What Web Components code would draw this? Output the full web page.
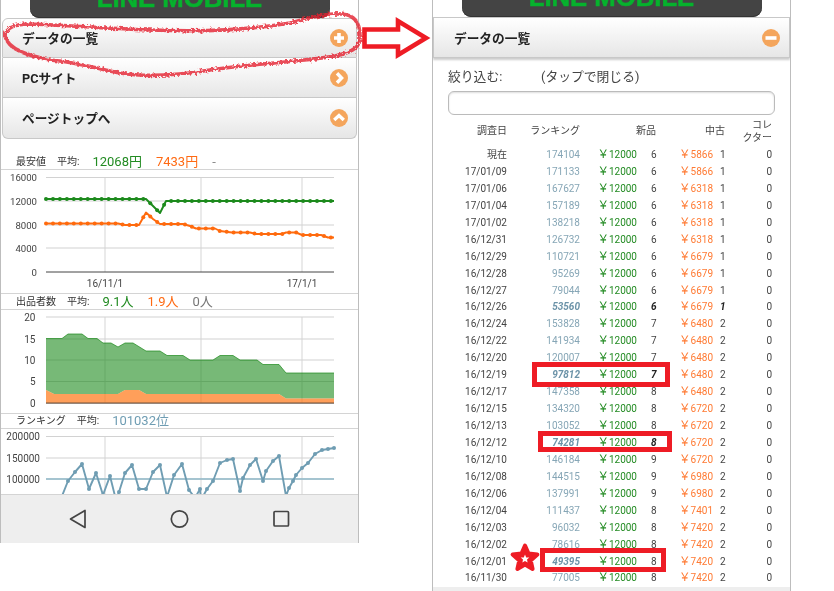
<!DOCTYPE html>
<html lang="ja">
<head>
<meta charset="utf-8">
<title>データの一覧</title>
<style>
  html, body { margin: 0; padding: 0; background: #fff; }
  body { width: 834px; height: 591px; overflow: hidden; font-family: Roboto, "Noto Sans CJK JP", sans-serif; color: #444; }
  shot-canvas { --blur: blur(.4px); }
</style>
</head>
<body>
<shot-canvas>
  <phone-shot style="left:0;top:0;width:359px;height:543px">
    <logo-bar style="margin:0 28.5px;height:18px"></logo-bar>
    <acc-row icon="plus" first style="height:40px">データの一覧</acc-row>
    <acc-row icon="right" style="height:40px">PCサイト</acc-row>
    <acc-row icon="up" last style="height:41px">ページトップへ</acc-row>
    <stat-line style="height:31px" label="最安値">
      <span style="color:#228b22">12068円</span><span style="color:#ff6a13">7433円</span><span style="color:#888">-</span>
    </stat-line>
    <trend-chart kind="price" style="height:123px"></trend-chart>
    <stat-line style="height:16px" label="出品者数">
      <span style="color:#228b22">9.1人</span><span style="color:#ff6a13">1.9人</span><span style="color:#777">0人</span>
    </stat-line>
    <trend-chart kind="sellers" style="height:103px"></trend-chart>
    <stat-line style="height:15px" label="ランキング">
      <span style="color:#6f9db3">101032位</span>
    </stat-line>
    <trend-chart kind="rank" style="height:65px"></trend-chart>
    <nav-bar></nav-bar>
  </phone-shot>

  <phone-shot style="left:432px;top:0;width:359px;height:591px">
    <logo-bar style="margin:0 28.5px;height:17px"></logo-bar>
    <acc-row icon="minus" open style="height:41px">データの一覧</acc-row>
    <data-table></data-table>
  </phone-shot>

  <mark-layer></mark-layer>
</shot-canvas>

<script>
// screenshot canvas, the two phones sit on it
class ShotCanvas extends HTMLElement {
    constructor() {
        super();
        this.attachShadow({ mode: 'open' });
        this.shadowRoot.innerHTML = `
            <style>
                :host { display: block; position: relative; width: 834px; height: 591px; overflow: hidden; }
            </style>
            <slot></slot>
        `;
    }
}

class PhoneShot extends HTMLElement {
    constructor() {
        super();
        this.attachShadow({ mode: 'open' });
        this.shadowRoot.innerHTML = `
            <style>
                :host {
                    position: absolute;
                    display: flex;
                    flex-direction: column;
                    box-sizing: border-box;
                    overflow: hidden;
                    background: #fff;
                    border-left: 1.5px solid #bdbdbd;
                    border-right: 1.5px solid #bdbdbd;
                    filter: var(--blur);
                }
            </style>
            <slot></slot>
        `;
    }
}

class LogoBar extends HTMLElement {
    constructor() {
        super();
        this.attachShadow({ mode: 'open' });
        this.shadowRoot.innerHTML = `
            <style>
                :host {
                    display: flex;
                    flex: none;
                    justify-content: center;
                    align-items: flex-end;
                    overflow: hidden;
                    background: #444;
                    border-radius: 0 0 9px 9px;
                    box-shadow: inset 0 -1px 0 #333;
                }
                span {
                    font: bold 25.7px/26px "Liberation Sans", sans-serif;
                    color: #06b22d;
                    -webkit-text-stroke: .5px #06b22d;
                    white-space: nowrap;
                    margin-bottom: 7.5px;
                }
            </style>
            <span>LINE MOBILE</span>
        `;
    }
}

const ROW_ICONS = {
    plus: '<path d="M10 5v10M5 10h10" stroke="#fff" stroke-width="3.6" fill="none"/>',
    minus: '<rect x="4.5" y="8.2" width="11" height="3.6" fill="#fff"/>',
    right: '<path d="M8 5.2l4.6 4.8L8 14.8" stroke="#fff" stroke-width="3.4" fill="none"/>',
    up: '<path d="M5.2 12l4.8-4.4 4.8 4.4" stroke="#fff" stroke-width="3.4" fill="none"/>'
};

class AccRow extends HTMLElement {
    constructor() {
        super();
        this.attachShadow({ mode: 'open' });
    }

    connectedCallback() {
        const first = this.hasAttribute('first');
        const last = this.hasAttribute('last');
        const open = this.hasAttribute('open');
        this.shadowRoot.innerHTML = `
            <style>
                :host {
                    display: flex;
                    flex: none;
                    align-items: center;
                    justify-content: space-between;
                    box-sizing: border-box;
                    padding: 0 ${open ? 8 : 7.5}px 0 ${open ? 20 : 19}px;
                    margin: 0 ${open ? 0 : 1}px;
                    background: linear-gradient(#fff, #e6e6e6);
                    border: 1px solid #c8c8c8;
                    border-top-width: ${first || open ? 1 : 0}px;
                    border-radius: ${first ? '6px 6px' : '0 0'} ${last ? '6px 6px' : '0 0'};
                    font-size: 12.7px;
                    font-weight: 700;
                    color: #222;
                    ${open ? 'box-shadow: 0 2px 2px #ccc;' : ''}
                }
                span { position: relative; top: -.5px; }
                svg { width: 20px; height: 20px; flex: none; }
            </style>
            <span><slot></slot></span>
            <svg viewBox="0 0 20 20">
                <circle cx="10" cy="10" r="9" fill="#f4a55c"/>
                ${ROW_ICONS[this.getAttribute('icon')]}
            </svg>
        `;
    }
}

class StatLine extends HTMLElement {
    constructor() {
        super();
        this.attachShadow({ mode: 'open' });
    }

    connectedCallback() {
        this.shadowRoot.innerHTML = `
            <style>
                :host {
                    display: flex;
                    flex: none;
                    align-items: flex-end;
                    box-sizing: border-box;
                    padding-left: 15px;
                    font-size: 10px;
                    line-height: 14px;
                    color: #333;
                    border-bottom: 1px solid #d4d4d4;
                }
                .label { margin-right: 11px; }
                .avg { margin-right: 13px; }
                ::slotted(span) { font-size: 13px; margin-right: 14px; }
            </style>
            <span class="label">${this.getAttribute('label')}</span>
            <span class="avg">平均:</span>
            <slot></slot>
        `;
    }
}

// chart coords are page coords, so they can be read straight off the reference
const CHARTS = {
    price: {
        top: 170,
        labelX: 37,
        labelSize: 9.6,
        grid: [[177.5, '16000'], [201, '12000'], [225, '8000'], [248, '4000'], [272, '0']],
        months: [[105, '16/11/1'], [201, ''], [302, '17/1/1']],
        monthY: 287,
        lines: [
            { color: '#1c8a1c', pts: [[46, 199], [146, 199], [160, 213], [166, 201], [334, 201]] },
            { color: '#ff6a0d', pts: [[46, 223.5], [118, 223.5], [125, 225], [139, 225], [146, 212.5], [153, 219], [160, 224], [183, 224], [190, 226], [196, 228.5], [215, 228.5], [220, 231], [232, 232.5], [250, 232.5], [256, 234], [282, 234], [286, 232.5], [296, 232.5], [302, 235], [321, 235], [328, 237.5], [334, 237.5]] }
        ]
    },
    sellers: {
        top: 310,
        labelX: 35.5,
        labelSize: 10,
        grid: [[317, '20'], [339, '15'], [360, '10'], [381.5, '5'], [403, '0']],
        months: [[105, ''], [201, ''], [302, '']],
        areas: [
            { color: '#1c8a1c', opacity: .6, pts: [[46, 338.5], [62, 338.5], [68, 334], [82, 334], [88, 338.5], [97, 338.5], [103, 343], [111, 343], [118, 347], [125, 343], [133, 343], [146, 351], [160, 351], [167, 355.5], [183, 355.5], [190, 360], [213, 360], [220, 355.5], [233, 355.5], [240, 360], [257, 360], [263, 364.5], [279, 364.5], [286, 373], [334, 373]] },
            { color: '#ff7a1a', opacity: .72, pts: [[46, 390], [54, 394], [118, 394], [125, 390], [139, 390], [146, 394], [279, 394], [286, 398.5], [334, 398.5]] }
        ]
    },
    rank: {
        top: 429,
        labelX: 40,
        labelSize: 10,
        grid: [[436.5, '200000'], [458, '150000'], [479, '100000'], [500, ''], [521, '']],
        months: [[105, ''], [201, ''], [302, '']],
        base: 479,
        raw: [
            [47, 510], [54, 515], [62, 496], [68, 481], [75, 472], [82, 464], [89, 489], [96, 473], [103, 495], [110, 476], [116, 500], [119, 492], [125, 473], [132, 465], [139, 489], [146, 489], [153, 472], [160, 465], [167, 497], [174, 475], [182, 464], [189, 490], [195, 498], [200, 489], [201, 500], [207, 489], [213, 481], [220, 463], [227, 460], [233, 459], [240, 491], [243, 478], [250, 465], [256, 459], [263, 481], [266, 471], [273, 461], [279, 456], [286, 496], [289, 488], [293, 481], [296, 475], [302, 468], [308, 463], [315, 454], [322, 450], [328, 449], [334, 448]
        ]
    }
};

class TrendChart extends HTMLElement {
    constructor() {
        super();
        this.attachShadow({ mode: 'open' });
    }

    connectedCallback() {
        const c = CHARTS[this.getAttribute('kind')];
        let s = '';
        const h = this.getAttribute('kind') === 'rank' ? 120 : 124;
        // svg x is page x minus the phone border, y is page y
        c.months.forEach(([x, t]) => {
            s += `<line x1="${x}" x2="${x}" y1="${c.grid[0][0]}" y2="${c.grid[c.grid.length - 1][0]}" stroke="#dcdcdc" stroke-width="1.2"/>`;
            if (t) s += `<text x="${x}" y="${c.monthY}" text-anchor="middle">${t}</text>`;
        });
        c.grid.forEach(([y, t], i) => {
            const bottom = i === c.grid.length - 1 && t === '0';
            s += `<line x1="46" x2="334" y1="${y}" y2="${y}" stroke="${bottom ? '#444' : '#d2d2d2'}" stroke-width="${bottom ? 1 : 1.1}"/>`;
            if (t) s += `<text x="${c.labelX}" y="${y + 3.6}" text-anchor="end" font-size="${c.labelSize}">${t}</text>`;
        });
        if (c.lines) {
            c.lines.forEach(l => {
                s += this.polyline(l.pts, l.color);
                s += this.dotsAlong(l.pts, l.color);
            });
        }
        if (c.areas) {
            // stacked: the green band stops where the orange band starts
            const [green, orange] = c.areas;
            const floor = [...orange.pts].reverse().map(p => p.join(',')).join(' ');
            s += `<polygon points="${green.pts.map(p => p.join(',')).join(' ')} ${floor}" fill="${green.color}" fill-opacity="${green.opacity}"/>`;
            s += `<polyline points="${green.pts.map(p => p.join(',')).join(' ')}" fill="none" stroke="${green.color}" stroke-opacity=".7"/>`;
            s += `<polygon points="46,403 ${orange.pts.map(p => p.join(',')).join(' ')} 334,403" fill="${orange.color}" fill-opacity="${orange.opacity}"/>`;
            s += '<line x1="46" x2="334" y1="403" y2="403" stroke="#8a6a55" stroke-width="1"/>';
        }
        if (c.raw) {
            s += `<line x1="46" x2="334" y1="${c.base}" y2="${c.base}" stroke="#8fb8c9" stroke-width="1.6"/>`;
            s += this.polyline(c.raw, '#6f9db3');
            c.raw.forEach(([x, y]) => { s += `<circle cx="${x}" cy="${y}" r="2" fill="#6f9db3"/>`; });
        }
        this.shadowRoot.innerHTML = `
            <style>
                :host {
                    display: block;
                    flex: none;
                    overflow: hidden;
                    border-bottom: 1px solid #d4d4d4;
                    box-sizing: content-box;
                }
                svg { display: block; margin-left: -1.5px; margin-top: 0; }
                text { font-family: Roboto, sans-serif; font-size: 10px; fill: #444; }
                text[font-size="9.6"] { font-size: 9.6px; }
            </style>
            <svg width="359" height="${h}" viewBox="0 ${c.top} 359 ${h}">${s}</svg>
        `;
    }

    polyline(pts, color) {
        return `<polyline points="${pts.map(p => p.join(',')).join(' ')}" fill="none" stroke="${color}" stroke-width="1.9" stroke-linejoin="round"/>`;
    }

    // price charts have a dot per sample, roughly every 7px
    dotsAlong(pts, color) {
        let out = '';
        for (let x = pts[0][0]; x <= 334.5; x += 6.95) {
            let i = 0;
            while (i < pts.length - 2 && pts[i + 1][0] < x) i++;
            const [x0, y0] = pts[i];
            const [x1, y1] = pts[i + 1];
            const y = y0 + (y1 - y0) * Math.min(1, (x - x0) / (x1 - x0));
            out += `<circle cx="${x.toFixed(1)}" cy="${y.toFixed(1)}" r="2" fill="${color}"/>`;
        }
        return out;
    }
}

class NavBar extends HTMLElement {
    constructor() {
        super();
        this.attachShadow({ mode: 'open' });
        this.shadowRoot.innerHTML = `
            <style>
                :host {
                    display: block;
                    flex: none;
                    height: 48px;
                    margin-left: -1.5px;
                    margin-right: -1.5px;
                    background: #eee;
                }
                svg { display: block; }
            </style>
            <svg width="359" height="48" viewBox="0 495 359 48" fill="none" stroke="#444" stroke-width="1.7">
                <path d="M85 510.5v17l-14.5-8.5z" stroke-linejoin="round"/>
                <circle cx="179.5" cy="519" r="8.2"/>
                <rect x="274" y="511.5" width="14.5" height="14.5" rx="1"/>
            </svg>
        `;
    }
}

const TABLE_ROWS = [
    ['現在', 174104, 6, 5866, 1],
    ['17/01/09', 171133, 6, 5866, 1],
    ['17/01/06', 167627, 6, 6318, 1],
    ['17/01/04', 157189, 6, 6318, 1],
    ['17/01/02', 138218, 6, 6318, 1],
    ['16/12/31', 126732, 6, 6318, 1],
    ['16/12/29', 110721, 6, 6679, 1],
    ['16/12/28', 95269, 6, 6679, 1],
    ['16/12/27', 79044, 6, 6679, 1],
    ['16/12/26', 53560, 6, 6679, 1, 'rnu'],
    ['16/12/24', 153828, 7, 6480, 2],
    ['16/12/22', 141934, 7, 6480, 2],
    ['16/12/20', 120007, 7, 6480, 2],
    ['16/12/19', 97812, 7, 6480, 2, 'rn'],
    ['16/12/17', 147358, 8, 6480, 2],
    ['16/12/15', 134320, 8, 6720, 2],
    ['16/12/13', 103052, 8, 6720, 2],
    ['16/12/12', 74281, 8, 6720, 2, 'rn'],
    ['16/12/10', 146184, 9, 6720, 2],
    ['16/12/08', 144515, 9, 6980, 2],
    ['16/12/06', 137991, 9, 6980, 2],
    ['16/12/04', 111437, 8, 7401, 2],
    ['16/12/03', 96032, 8, 7420, 2],
    ['16/12/02', 78616, 8, 7420, 2],
    ['16/12/01', 49395, 8, 7420, 2, 'r'],
    ['16/11/30', 77005, 8, 7420, 2]
];

class DataTable extends HTMLElement {
    constructor() {
        super();
        this.attachShadow({ mode: 'open' });
        const rows = TABLE_ROWS.map(([date, rank, nc, used, uc, em = '']) => `
            <div class="row">
                <span class="r">${date}</span>
                <span class="r rank ${em.includes('r') ? 'em' : ''}">${rank}</span>
                <span class="r new"><i>￥</i>12000</span>
                <span class="nc ${em.includes('n') ? 'em' : ''}">${nc}</span>
                <span class="r used"><i>￥</i>${used}</span>
                <span class="uc ${em.includes('u') ? 'em' : ''}">${uc}</span>
                <span class="r">0</span>
            </div>`).join('');
        this.shadowRoot.innerHTML = `
            <style>
                :host {
                    display: block;
                    flex: 1;
                    padding: 0 0 0 15px;
                    font-size: 10px;
                    color: #444;
                }
                .filter { display: flex; height: 33px; padding-top: 10px; box-sizing: border-box; font-size: 12.8px; line-height: 18px; }
                .filter span:first-child { width: 93px; }
                .box {
                    box-sizing: border-box;
                    width: 327px;
                    height: 24px;
                    border: 1px solid #bbb;
                    border-radius: 6px;
                    box-shadow: inset 0 1px 2px #ddd;
                    background: #fff;
                }
                .row, .head {
                    display: grid;
                    grid-template-columns: 59px 73px 57px 33px 43px 27px 32px;
                    align-items: center;
                }
                .row { height: 16.95px; line-height: 16.95px; }
                .row i { font-style: normal; font-size: 11.5px; line-height: 1; }
                .head { height: 32px; padding-bottom: 1px; box-sizing: border-box; line-height: 13px; }
                .r { text-align: right; }
                .rank { color: #86a6b6; }
                .new { color: #228b22; }
                .used { color: #ff7a33; }
                .nc { padding-left: 14px; }
                .uc { padding-left: 7px; }
                .em { font-weight: 700; font-style: italic; }
                .rank.em { color: #6c93a8; }
                .nc.em, .uc.em { color: #222; }
                .hn { grid-column: 3 / 5; text-align: right; padding-right: 14px; }
                .hu { grid-column: 5 / 7; text-align: right; padding-right: 15px; }
                .foot { height: 4px; margin: 0 0 0 -15px; background: #eee; }
            </style>
            <div class="filter"><span>絞り込む:</span><span>(タップで閉じる)</span></div>
            <div class="box"></div>
            <div class="head">
                <span class="r">調査日</span>
                <span class="r">ランキング</span>
                <span class="hn">新品</span>
                <span class="hu">中古</span>
                <span class="r">コレ<br>クター</span>
            </div>
            ${rows}
            <div class="foot"></div>
        `;
    }
}

// the red pen marks someone drew over the screenshots
class MarkLayer extends HTMLElement {
    constructor() {
        super();
        this.attachShadow({ mode: 'open' });
        this.shadowRoot.innerHTML = `
            <style>
                :host { position: absolute; left: 0; top: 0; width: 834px; height: 591px; pointer-events: none; }
                svg { display: block; }
            </style>
            <svg width="834" height="591" viewBox="0 0 834 591" fill="none">
                <defs>
                    <filter id="pen" x="-5%" y="-20%" width="110%" height="140%">
                        <feTurbulence type="fractalNoise" baseFrequency=".4" numOctaves="2" seed="4"/>
                        <feDisplacementMap in="SourceGraphic" scale="5"/>
                        <feGaussianBlur stdDeviation=".6"/>
                    </filter>
                </defs>
                <path filter="url(#pen)" stroke="#e5202e" stroke-width="3.6" stroke-opacity=".8" stroke-linejoin="round"
                    d="M5 36C6 28 15 24 30 24C60 25 100 28 150 30C200 32 250 30 290 23C310 18 325 13 342 14C356 15 360 24 360 36C361 46 354 52 335 56C300 62 250 64 210 70C180 75 150 78 120 73C95 68 75 62 50 60C30 56 8 50 5 36Z"/>
                <polygon points="364.5,29.5 398,29.5 398,21 426,38 398,55 398,46.5 364.5,46.5" stroke="#ee1c25" stroke-width="4.6" stroke-linejoin="miter"/>
                <g stroke="#ee1c25" stroke-width="5">
                    <rect x="534.5" y="364.5" width="133" height="20"/>
                    <rect x="540.5" y="433.5" width="129" height="16"/>
                    <rect x="542.5" y="550.5" width="121" height="19"/>
                </g>
                <polygon points="525,545.5 528.5,553.6 537.4,554.5 530.7,560.4 532.6,569 525,564.5 517.4,569 519.3,560.4 512.6,554.5 521.5,553.6" fill="#ee1c25" stroke="#ee1c25" stroke-width="4" stroke-linejoin="round"/>
                <polygon points="525,554.5 526.2,557.4 529.3,557.6 527,559.6 527.6,562.6 525,561 522.4,562.6 523,559.6 520.7,557.6 523.8,557.4" fill="#fff"/>
            </svg>
        `;
    }
}

customElements.define('shot-canvas', ShotCanvas);
customElements.define('phone-shot', PhoneShot);
customElements.define('logo-bar', LogoBar);
customElements.define('acc-row', AccRow);
customElements.define('stat-line', StatLine);
customElements.define('trend-chart', TrendChart);
customElements.define('nav-bar', NavBar);
customElements.define('data-table', DataTable);
customElements.define('mark-layer', MarkLayer);
</script>
</body>
</html>
